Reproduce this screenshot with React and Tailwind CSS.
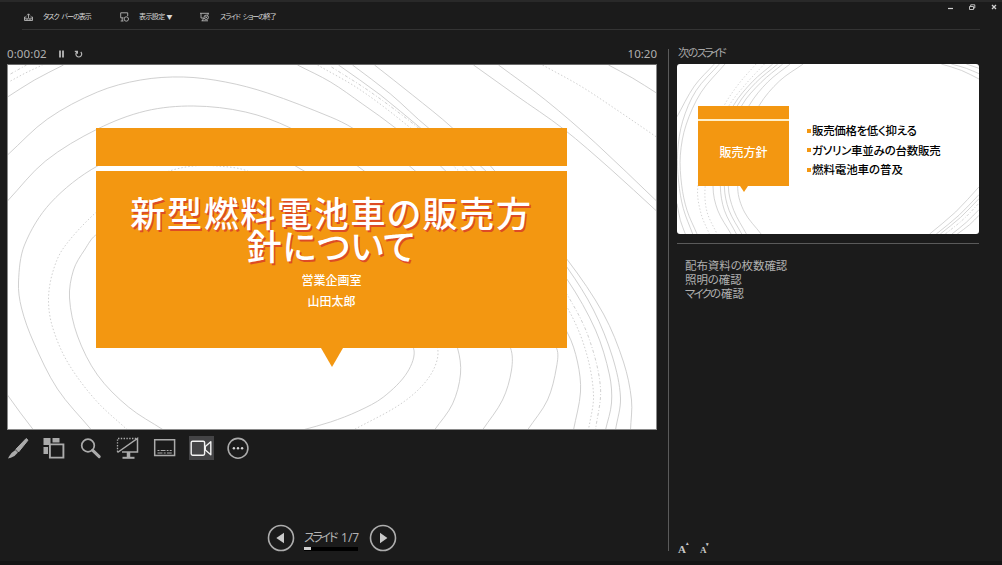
import React from 'react';

const dist = (a, b) => Math.hypot(b[0] - a[0], b[1] - a[1]) || 1;

// Tangent at point i, averaged over its neighbours by distance
function tangent(points, i) {
  const prev = points[i - 1] || points[i];
  const next = points[i + 1] || points[i];
  const len = (i > 0 ? dist(prev, points[i]) : 0) + (i < points.length - 1 ? dist(points[i], next) : 0);
  return [(next[0] - prev[0]) / len, (next[1] - prev[1]) / len];
}

// Smooth line through a list of [x, y] points
function toPath(points) {
  let d = `M${points[0][0]} ${points[0][1]}`;
  for (let i = 0; i < points.length - 1; i++) {
    const [a, b] = [points[i], points[i + 1]];
    const k = dist(a, b) / 3;
    const ta = tangent(points, i);
    const tb = tangent(points, i + 1);
    d += `C${a[0] + ta[0] * k} ${a[1] + ta[1] * k} ${b[0] - tb[0] * k} ${b[1] - tb[1] * k} ${b[0]} ${b[1]}`;
  }
  return d;
}

const MAIN_LINES = [
  { pts: [[7, 97], [34, 80], [63, 65]] },
  { pts: [[7, 155], [47, 119], [97, 92], [140, 80], [183, 77], [225, 82], [267, 93], [330, 117], [352, 128], [409, 166], [470, 225], [520, 285], [556, 348], [556, 367], [547, 400], [527, 430]] },
  { pts: [[7, 201], [45, 161], [97, 129], [145, 111], [193, 106], [245, 112], [290, 128], [357, 166], [430, 230], [485, 300], [510, 348], [511, 370], [502, 400], [482, 430]] },
  { pts: [[91, 430], [57, 389], [33, 342], [21, 308], [18, 282], [24, 245], [50, 203], [97, 166], [160, 142], [225, 142], [295, 166], [390, 235], [440, 305], [457, 348], [460, 374], [452, 404], [434, 430]] },
  { pts: [[7, 395], [20, 413], [33, 430]] },
  { pts: [[127, 430], [95, 400], [67, 362], [52, 327], [48, 300], [52, 273], [63, 248], [97, 211], [130, 187], [169, 171], [193, 166], [217, 166], [247, 171], [340, 215], [410, 290], [437, 348], [430, 375], [403, 402], [353, 430]], dash: '1.5 2' },
  { pts: [[163, 430], [128, 407], [97, 375], [77, 336], [69, 298], [73, 270], [84, 250], [97, 234], [180, 200], [280, 220], [380, 290], [413, 348], [407, 372], [383, 397], [358, 411], [330, 422], [302, 430]] },
  { pts: [[297, 65], [330, 82], [362, 104], [395, 128], [440, 166], [510, 240], [567, 333], [577, 362], [580, 392], [573, 430]] },
  { pts: [[317, 65], [360, 90], [410, 128], [453, 166], [520, 235], [567, 308], [585, 350], [593, 395], [588, 430]], dash: '1.5 2' },
  { pts: [[331, 67], [370, 92], [418, 128], [462, 166], [530, 240], [568, 297], [588, 337], [600, 388], [595, 430]], dash: '3 2 1 2' },
  { pts: [[338, 65], [380, 95], [420, 128], [470, 166], [525, 226], [567, 280], [595, 330], [609, 375], [611, 403], [605, 430]] },
  { pts: [[352, 65], [390, 94], [428, 128], [480, 166], [525, 214], [567, 268], [593, 310], [612, 357], [620, 398], [615, 430]] },
  { pts: [[374, 65], [412, 95], [452, 128], [490, 166], [567, 260], [603, 314], [623, 362], [631, 400], [630, 430]] },
  { pts: [[473, 65], [515, 95], [563, 129], [610, 169], [656, 211]] },
  { pts: [[498, 65], [545, 100], [595, 143], [656, 201]] },
  { pts: [[542, 65], [580, 86], [615, 109], [656, 137]], dash: '1.5 2' },
  { pts: [[608, 65], [632, 78], [656, 93]] },
  { pts: [[10, 74], [26, 65]], dash: '3 2 1 2' },
  { pts: [[10, 81], [25, 73], [42, 65]], dash: '1.5 2' },
];

const THUMB_LINES = [
  { pts: [[120, 7], [60, 73], [8, 165]] },
  { pts: [[135, 7], [65, 87], [25, 178], [10, 270], [13, 360], [27, 440], [55, 516]] },
  { pts: [[152, 7], [80, 92], [35, 190], [18, 280], [22, 370], [38, 445], [68, 516]] },
  { pts: [[8, 425], [18, 475], [33, 516]] },
  { pts: [[245, 7], [195, 64], [150, 130], [100, 240], [70, 380], [80, 455], [105, 516]], dash: '4 6' },
  { pts: [[270, 7], [215, 66], [165, 130], [110, 240], [92, 380], [98, 450], [128, 516]], dash: '4 6' },
  { pts: [[295, 7], [235, 59], [178, 130], [130, 240], [116, 375], [130, 445], [170, 516]] },
  { pts: [[310, 7], [245, 62], [190, 130], [145, 240], [138, 375], [150, 445], [186, 516]] },
  { pts: [[325, 7], [260, 62], [203, 130], [160, 240], [150, 375], [164, 445], [202, 516]] },
  { pts: [[347, 7], [280, 61], [225, 130], [175, 240], [162, 375], [178, 445], [216, 516]] },
  { pts: [[386, 7], [315, 58], [255, 130], [205, 240], [190, 380], [210, 450], [260, 516]] },
  { pts: [[800, 7], [860, 26], [913, 52]] },
  { pts: [[830, 7], [875, 20], [913, 36]] },
  { pts: [[875, 7], [913, 20]] },
  { pts: [[765, 516], [843, 450], [913, 375]] },
  { pts: [[785, 516], [853, 460], [913, 398]] },
  { pts: [[797, 516], [858, 466], [913, 410]] },
  { pts: [[812, 516], [865, 473], [913, 424]], dash: '8 5 3 5' },
  { pts: [[832, 516], [875, 481], [913, 443]] },
  { pts: [[848, 516], [885, 488], [913, 460]] },
];

function Contours({ lines, viewBox, width }) {
  return (
    <svg viewBox={viewBox} preserveAspectRatio="none" className="absolute inset-0 w-full h-full" fill="none" stroke="#c8c8c8" strokeWidth={width}>
      {lines.map((line, i) => (
        <path key={i} d={toPath(line.pts)} strokeDasharray={line.dash} />
      ))}
    </svg>
  );
}

function TopBar() {
  return (
    <header className="h-[30px] ml-[22px] mr-[22px] border-b border-[#343434] flex items-start pt-3 text-[7px] leading-[10px] text-[#d8d8d8] whitespace-nowrap">
      <div className="flex items-center w-[96px]">
        <svg className="ml-[1px] w-[11px] h-[10px]" viewBox="0 0 11 10" fill="none" stroke="#b5b5b5" strokeWidth="0.9">
          <path d="M5.5 6V2M4 3.4L5.5 1.8 7 3.4M3.5 5H1.5V8.5H9.5V5H7.5M1.5 6.8H9.5M4 7V8.5M7 7V8.5" />
        </svg>
        <span className="ml-[9px] tracking-[-1px] [word-spacing:2px]">タスク バーの表示</span>
      </div>
      <div className="flex items-center w-[81px]">
        <svg className="ml-[1px] w-[11px] h-[10px]" viewBox="0 0 11 10" fill="none" stroke="#b5b5b5" strokeWidth="0.9">
          <path d="M4.5 5.8H1.7V0.8H8.7V4M1.7 9H4.5M3.2 5.8V9" />
          <circle cx="7.3" cy="7" r="2.2" />
        </svg>
        <span className="ml-[9px] tracking-[-0.6px]">表示設定</span>
        <span className="ml-[2px] text-[6px]">▼</span>
      </div>
      <div className="flex items-center">
        <svg className="w-[11px] h-[10px]" viewBox="0 0 11 10" fill="none" stroke="#b5b5b5" strokeWidth="0.9">
          <path d="M1 1.3H10M2 1.3V6H4.5M9 1.3V3M2.5 8.8H9M4.5 6L3.5 8.8" />
          <circle cx="7.2" cy="5.3" r="2.2" />
          <path d="M6.3 4.4L8.1 6.2M8.1 4.4L6.3 6.2" />
        </svg>
        <span className="ml-[10px] tracking-[-1.05px] [word-spacing:2px]">スライド ショーの終了</span>
      </div>
      <svg className="ml-auto -mr-[18px] -mt-[9px] w-[52px] h-[9px]" viewBox="0 0 52 9" fill="none" stroke="#d0d0d0">
        <path d="M2 5.5H7" strokeWidth="1.2" />
        <path d="M23.5 3.5H27.5V6.5H23.5ZM24.7 3.5V1.8H28.8V5H27.5" strokeWidth="0.9" />
        <path d="M46 2L50 6M50 2L46 6" strokeWidth="1.3" />
      </svg>
    </header>
  );
}

function CurrentSlide() {
  return (
    <div className="relative w-[650px] h-[366px] bg-white overflow-hidden border border-[#8a8a8a] border-t-[#6a6a6a]">
      <Contours lines={MAIN_LINES} viewBox="7.5 65 648 364" width="0.85" />
      <div className="relative flex flex-col items-center mx-[88px] pt-[63px] w-[471px]">
        <div className="w-full h-[38px] bg-[#f39711]" />
        <div className="w-full h-[177px] mt-[5px] bg-[#f39711] text-white text-center pt-[26px]">
          <h1 className="text-[35px] leading-[33px] font-medium [text-shadow:1.5px_1.5px_0_#dd4b25]">
            <span className="block tracking-[1.7px]">新型燃料電池車の販売方</span>
            <span className="block tracking-[0.7px]">針について</span>
          </h1>
          <p className="mt-[7px] text-[12px] leading-[21px] font-medium">営業企画室</p>
          <p className="text-[12px] leading-[21px] font-medium">山田太郎</p>
        </div>
        <svg className="w-[22px] h-[19px]" viewBox="0 0 22 19">
          <path d="M0 0H22L11 19Z" fill="#f39711" />
        </svg>
      </div>
    </div>
  );
}

function Tools() {
  return (
    <div className="flex items-center h-[26px] mt-[5px] -ml-[1px] gap-[11px] text-[#ababab]">
      <svg className="w-[25px] h-[26px]" viewBox="0 0 25 26">
        <path d="M20.2 3.5L22 5.2 12.5 17 9.8 14.3Z" fill="currentColor" stroke="currentColor" strokeLinejoin="round" />
        <path d="M9.3 14.9L11.9 17.5 8.5 21 4.8 22.7 2 23.5 3.3 20.9 5.5 18Z" fill="currentColor" />
      </svg>
      <svg className="w-[25px] h-[26px]" viewBox="0 0 25 26">
        <path d="M1.5 3H8.5V10H1.5ZM10.5 3H17.5V7.5H10.5ZM1.5 12H6V19H1.5Z" fill="currentColor" />
        <path d="M7.9 9.4H21.4V22.6H7.9Z" fill="none" stroke="currentColor" strokeWidth="1.9" />
      </svg>
      <svg className="w-[26px] h-[26px]" viewBox="0 0 26 26" fill="none" stroke="currentColor">
        <circle cx="10" cy="10.5" r="6.3" strokeWidth="1.7" />
        <path d="M14.7 15.3L21.2 21.6" strokeWidth="3" strokeLinecap="round" />
      </svg>
      <svg className="w-[26px] h-[26px]" viewBox="0 0 26 26" fill="none" stroke="currentColor">
        <path d="M2.5 17V3.5H21.5" strokeWidth="1.3" strokeDasharray="1.4 1.4" />
        <path d="M2.5 17.5L22.5 3.5V17H7" strokeWidth="1.5" />
        <path d="M13.5 17V22" strokeWidth="3.5" />
        <path d="M7.5 22.8H19.5" strokeWidth="2" />
      </svg>
      <svg className="w-[26px] h-[26px]" viewBox="0 0 26 26" fill="none" stroke="currentColor">
        <path d="M2.7 4.7H22.6V20.5H2.7Z" strokeWidth="1.5" />
        <path d="M5.5 15.5H7.5M8.7 15.5H13.5M14.7 15.5H16.5M17.7 15.5H19.7M5.5 18H10.5M11.7 18H13.7M14.9 18H19.7" strokeWidth="1.1" />
      </svg>
      <div className="w-[25px] h-[24px] bg-[#444446]">
        <svg className="w-[25px] h-[24px]" viewBox="0 0 25 24" fill="none" stroke="#f2f2f2" strokeWidth="1.4" strokeLinejoin="round">
          <rect x="2.2" y="5.2" width="13.4" height="14" rx="1.4" />
          <path d="M16.3 10.5L21.8 5.8V18.7L16.3 14Z" />
        </svg>
      </div>
      <svg className="w-[26px] h-[26px]" viewBox="0 0 26 26">
        <circle cx="13" cy="13.3" r="9.9" fill="none" stroke="currentColor" strokeWidth="1.6" />
        <circle cx="8.9" cy="13.3" r="1.2" fill="#d5d5d5" />
        <circle cx="13" cy="13.3" r="1.2" fill="#d5d5d5" />
        <circle cx="17.1" cy="13.3" r="1.2" fill="#d5d5d5" />
      </svg>
    </div>
  );
}

function RoundButton({ d }) {
  return (
    <svg className="w-[28px] h-[28px] shrink-0" viewBox="0 0 28 28">
      <circle cx="14" cy="14" r="12.5" fill="none" stroke="#adadad" strokeWidth="1.6" />
      <path d={d} fill="#c9c9c9" />
    </svg>
  );
}

function Pager() {
  return (
    <div className="flex items-center mt-[63px] ml-[260px] gap-[9px] h-[28px]">
      <RoundButton d="M17 8.8V19.2L9.3 14Z" />
      <div className="w-[56px] pt-[5px]">
        <p className="text-[12px] leading-[14px] text-[#b2b2b2] whitespace-nowrap"><span className="tracking-[-2.3px]">スライド</span><span className="ml-[5px]">1/7</span></p>
        <div className="w-[54px] h-[4px] mt-[2px] bg-black">
          <div className="w-[7px] h-[3px] bg-[#d0d0d0]" />
        </div>
      </div>
      <RoundButton d="M11 8.8V19.2L18.4 14Z" />
    </div>
  );
}

function NextSlide() {
  return (
    <div className="relative w-[302px] h-[170px] bg-white rounded-[3px] overflow-hidden flex">
      <Contours lines={THUMB_LINES} viewBox="8 7 905 509" width="2.3" />
      <div className="relative w-[91px] ml-[21px] pt-[42px] flex flex-col items-center">
        <div className="w-full h-[13px] bg-[#f39711]" />
        <div className="w-full h-[1.5px] bg-[#fff0c8]" />
        <div className="w-full h-[65px] bg-[#f39711] text-white text-[12px] font-medium flex items-center justify-center">販売方針</div>
        <svg className="w-[8px] h-[6px]" viewBox="0 0 8 6">
          <path d="M0 0H8L4 6Z" fill="#f39711" />
        </svg>
      </div>
      <ul className="relative ml-[18px] pt-[57px] text-[11.5px] leading-[19.5px] text-black font-medium whitespace-nowrap">
        <li className="flex items-center gap-[1px]"><span className="w-[4px] h-[4px] bg-[#f39711]" /><span className="tracking-[-0.35px]">販売価格を低く抑える</span></li>
        <li className="flex items-center gap-[1px]"><span className="w-[4px] h-[4px] bg-[#f39711]" /><span className="tracking-[-0.25px]">ガソリン車並みの台数販売</span></li>
        <li className="flex items-center gap-[1px]"><span className="w-[4px] h-[4px] bg-[#f39711]" /><span className="tracking-[-0.1px]">燃料電池車の普及</span></li>
      </ul>
    </div>
  );
}

export default function App() {
  return (
    <div className="w-[1002px] h-[565px] bg-[#1b1b1b] border-t-2 border-t-[#292929] border-b-4 border-b-[#141414] overflow-hidden flex flex-col font-['Noto_Sans','Noto_Sans_CJK_JP',sans-serif] [font-feature-settings:'palt']">
      <div className="-mt-[2px]">
        <TopBar />
      </div>
      <div className="flex flex-1">
        <main className="w-[650px] ml-[7px]">
          <div className="h-[34px] pt-[14px] flex items-center text-[11.5px] leading-[16px] text-[#b0b0b0]">
            <span className="tracking-[0.1px]">0:00:02</span>
            <svg className="ml-[11px] w-[28px] h-[10px]" viewBox="0 0 28 10" fill="none" stroke="#b8b8b8">
              <path d="M2 1.5V8.5M5 1.5V8.5" strokeWidth="1.8" />
              <path d="M18.8 3A2.9 2.9 0 1 0 22.8 3M16.8 2.4H19.4V4.8" strokeWidth="1.2" />
            </svg>
            <span className="ml-auto">10:20</span>
          </div>
          <CurrentSlide />
          <Tools />
          <Pager />
        </main>
        <aside className="ml-[11px] mt-[19px] h-[502px] w-[320px] border-l border-[#5a5a5a] pl-[8px] flex flex-col text-[#a8a8a8]">
          <p className="text-[11px] leading-[15px] h-[16px] -mt-[4px] mb-[3px] ml-[1px] tracking-[-2.6px]"><span className="tracking-[-1.4px]">次の</span>スライド</p>
          <NextSlide />
          <div className="w-[302px] mt-[9px] border-t border-[#5a5a5a]" />
          <div className="ml-[8px] mt-[15px] text-[11.5px] leading-[14px] text-[#b0b0b0]">
            <p className="tracking-[-0.1px]">配布資料の枚数確認</p>
            <p className="tracking-[-0.1px]">照明の確認</p>
            <p><span className="tracking-[-1.9px]">マイク</span>の確認</p>
          </div>
          <div className="mt-auto -mb-[5px] ml-[1px] flex items-baseline gap-[11px] font-['Liberation_Serif',serif] font-bold text-[#c8c8c8] leading-[12px]">
            <span className="text-[11px] flex">A<sup className="text-[5px] leading-[6px]">▴</sup></span>
            <span className="text-[9px] flex">A<sup className="text-[5px] leading-[6px]">▾</sup></span>
          </div>
        </aside>
      </div>
    </div>
  );
}
